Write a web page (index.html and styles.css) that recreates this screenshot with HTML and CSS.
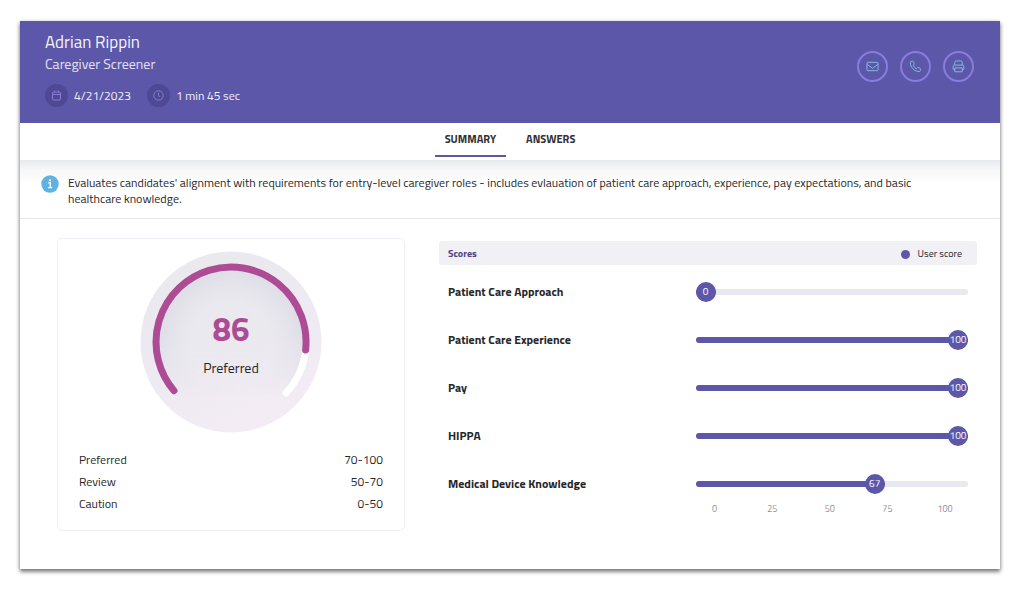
FILE: index.html
```html
<!DOCTYPE html>
<html lang="en">
<head>
<meta charset="utf-8">
<meta name="viewport" content="width=device-width, initial-scale=1">
<title>Adrian Rippin - Caregiver Screener</title>
<link rel="stylesheet" href="styles.css">
</head>
<body>
<main class="window">
  <header class="header">
    <div class="candidate">
      <h1 class="name">Adrian Rippin</h1>
      <p class="role">Caregiver Screener</p>
      <ul class="meta">
        <li class="meta-item">
          <span class="meta-icon"><svg width="11" height="11" viewBox="0 0 11 11"><rect x="1.5" y="2" width="8" height="8" rx="1"/><path d="M1.5 4.5h8M3.5 .7v2M7.500 .7v2"/></svg></span>
          4/21/2023
        </li>
        <li class="meta-item">
          <span class="meta-icon"><svg width="11" height="11" viewBox="0 0 11 11"><circle cx="5.500" cy="5.500" r="4.700"/><path d="M5.500 2.800v3l1.700 1"/></svg></span>
          1 min 45 sec
        </li>
      </ul>
    </div>
    <div class="actions">
      <button class="action" type="button" aria-label="Email"><svg width="13" height="13" viewBox="0 0 14 14"><rect x="1" y="2.500" width="12" height="9" rx="1"/><path d="M1.300 4.800 7 9l5.700-4.200"/></svg></button>
      <button class="action" type="button" aria-label="Call"><svg width="13" height="13" viewBox="0 0 14 14"><path d="M2.200 1.600 3.600 1.200c.5-.1.900.1 1.100.5l.9 2c.2.400.1.800-.2 1.100l-.9.900c.6 1.500 1.800 2.700 3.400 3.600l1-1c.3-.3.700-.3 1.100-.2l2 .9c.400.2.6.6.5 1.100l-.4 1.500c-.1.500-.5.8-1 .8C5.700 12.400 1.400 8 1.400 2.700c0-.6.3-1 .8-1.100Z"/></svg></button>
      <button class="action" type="button" aria-label="Print"><svg width="13" height="13" viewBox="0 0 14 14"><path d="M3 5.500V2.500A1.500 1.500 0 0 1 4.500 1h5A1.500 1.500 0 0 1 11 2.500v3M3 10H1.200V7A1.500 1.500 0 0 1 2.700 5.500h8.600A1.500 1.500 0 0 1 12.800 7v3H11M3 8.500h8v4.200H3z"/></svg></button>
    </div>
  </header>

  <div class="tabs" role="tablist">
    <button class="tab tab-active" type="button" role="tab" aria-selected="true">SUMMARY</button>
    <button class="tab" type="button" role="tab" aria-selected="false">ANSWERS</button>
  </div>

  <section class="notice">
    <svg class="notice-icon" width="18" height="18" viewBox="0 0 18 18"><circle cx="9" cy="9" r="8.700" fill="#5fb2e4"/><path d="M7.300 7.800h2v4.700M7 12.600h4.200" fill="none" stroke="#fff" stroke-width="1.400"/><circle cx="9" cy="5.300" r="1.100" fill="#fff"/></svg>
    <p class="notice-text">Evaluates candidates' alignment with requirements for entry-level caregiver roles - includes evlauation of patient care approach, experience, pay expectations, and basic healthcare knowledge.</p>
  </section>

  <div class="content">
    <section class="result">
      <div class="gauge">
        <svg class="gauge-art" viewBox="0 0 182 182" aria-hidden="true">
          <defs>
            <linearGradient id="disc" x1=".2" y1="0" x2=".7" y2="1">
              <stop offset="0" stop-color="#e9e9ee"/>
              <stop offset=".5" stop-color="#edeaf1"/>
              <stop offset="1" stop-color="#f4ecf5"/>
            </linearGradient>
            <linearGradient id="fade" x1="0" y1="0" x2="0" y2="1">
              <stop offset="0" stop-color="#fff"/>
              <stop offset=".45" stop-color="#fff"/>
              <stop offset=".85" stop-color="#000"/>
            </linearGradient>
            <radialGradient id="inner">
              <stop offset=".55" stop-color="#e8e8ed" stop-opacity=".6"/>
              <stop offset="1" stop-color="#dddce6"/>
            </radialGradient>
            <mask id="lower"><rect x="15" y="15" width="152" height="152" fill="url(#fade)"/></mask>
          </defs>
          <circle cx="91" cy="91" r="90.500" fill="url(#disc)"/>
          <circle cx="91" cy="91" r="74" fill="url(#inner)" mask="url(#lower)"/>
          <g fill="none" stroke-width="7" stroke-linecap="round">
            <path d="M165.600 99A75 75 0 0 1 146 142" stroke="#fff"/>
            <path d="M34 139.700A75 75 0 1 1 165.600 99" stroke="#ad4c95"/>
          </g>
        </svg>
        <div class="gauge-label">
          <strong class="gauge-value">86</strong>
          <span class="gauge-status">Preferred</span>
        </div>
      </div>
      <table class="ranges">
        <tr><th scope="row">Preferred</th><td>70-100</td></tr>
        <tr><th scope="row">Review</th><td>50-70</td></tr>
        <tr><th scope="row">Caution</th><td>0-50</td></tr>
      </table>
    </section>

    <section class="scores">
      <div class="scores-head">
        <h2 class="scores-title">Scores</h2>
        <span class="legend">User score</span>
      </div>
      <div class="score-list">
        <div class="score"><span id="s1">Patient Care Approach</span><div class="track" role="meter" aria-labelledby="s1" aria-valuenow="0"><div class="fill" style="--value: 0"><span class="knob">0</span></div></div></div>
        <div class="score"><span id="s2">Patient Care Experience</span><div class="track" role="meter" aria-labelledby="s2" aria-valuenow="100"><div class="fill" style="--value: 1"><span class="knob">100</span></div></div></div>
        <div class="score"><span id="s3">Pay</span><div class="track" role="meter" aria-labelledby="s3" aria-valuenow="100"><div class="fill" style="--value: 1"><span class="knob">100</span></div></div></div>
        <div class="score"><span id="s4">HIPPA</span><div class="track" role="meter" aria-labelledby="s4" aria-valuenow="100"><div class="fill" style="--value: 1"><span class="knob">100</span></div></div></div>
        <div class="score"><span id="s5">Medical Device Knowledge</span><div class="track" role="meter" aria-labelledby="s5" aria-valuenow="67"><div class="fill" style="--value: 0.67"><span class="knob">67</span></div></div></div>
      </div>
      <div class="axis-row">
        <div class="axis"><span>0</span><span>25</span><span>50</span><span>75</span><span>100</span></div>
      </div>
    </section>
  </div>
</main>
</body>
</html>
```
FILE: styles.css
```css
* { box-sizing: border-box; }

body {
  margin: 0;
  padding: 21px 24px 28px 20px;
  background: #fff;
  color: #262629;
  font-family: "Titillium Web", Roboto, "Liberation Sans", sans-serif;
  font-size: 12px;
  line-height: 16px;
}

h1, h2, p, ul { margin: 0; padding: 0; }
button { font-family: inherit; cursor: pointer; }

.window {
  background: #fff;
  box-shadow: 0 3px 4px rgba(0, 0, 0, .4), 0 1px 4px rgba(0, 0, 0, .3);
}

.header {
  display: flex;
  justify-content: space-between;
  align-items: flex-start;
  padding: 10px 26px 16px 25px;
  background: #5d57a9;
  color: #f3f2fb;
}
.name { font-size: 17px; line-height: 22px; font-weight: 400; }
.role { font-size: 14px; line-height: 22px; color: #e2e0f4; }
.meta {
  display: flex;
  gap: 16px;
  margin-top: 9px;
  list-style: none;
}
.meta-item { display: flex; align-items: center; gap: 6px; }
.meta-icon {
  display: grid;
  place-items: center;
  width: 23px;
  height: 23px;
  border-radius: 50%;
  background: #4f4895;
}
.meta-icon svg { fill: none; stroke: #857dd2; stroke-width: 1; }

.actions { display: flex; gap: 12px; padding-top: 20px; }
.action {
  display: grid;
  place-items: center;
  width: 31px;
  height: 31px;
  padding: 0;
  border: 2px solid #887ddd;
  border-radius: 50%;
  background: none;
}
.action svg { fill: none; stroke: #83c0e2; stroke-width: 1; stroke-linejoin: round; }

.tabs { display: flex; justify-content: center; gap: 10px; padding-bottom: 3px; }
.tab {
  padding: 8px 10px;
  border: 0;
  border-bottom: 2px solid transparent;
  background: none;
  color: #303034;
  font-size: 11px;
  line-height: 16px;
  font-weight: 700;
}
.tab-active { border-color: #5d57a9; }

.notice {
  display: flex;
  gap: 9px;
  padding: 15px 40px 11px 21px;
  border-bottom: 1px solid #e6e6ef;
  background: linear-gradient(#e6eaee, #f6f7f8 10px, #fff 24px);
}
.notice-icon { flex: none; }

.content {
  display: grid;
  grid-template-columns: 348fr 538fr;
  gap: 34px;
  padding: 19px 23px 38px 37px;
}

.result {
  padding: 12px 21px 15px;
  border: 1px solid #efeff6;
  border-radius: 5px;
}
.gauge { display: grid; place-items: center; }
.gauge > * { grid-area: 1 / 1; }
.gauge-art { width: 182px; height: 182px; }
.gauge-label { display: grid; justify-items: center; gap: 12px; padding-top: 4px; }
.gauge-value { color: #ad4c95; font-size: 33px; line-height: 36px; font-weight: 700; }
.gauge-status { font-size: 14px; line-height: 18px; }
.ranges { width: 100%; margin-top: 16px; border-collapse: collapse; line-height: 22px; }
.ranges th, .ranges td { padding: 0; font-weight: 400; }
.ranges th { text-align: left; }
.ranges td { text-align: right; }

.scores { padding-top: 3px; }
.scores-head {
  display: flex;
  justify-content: space-between;
  align-items: center;
  padding: 5px 15px 3px 9px;
  border-radius: 3px;
  background: #f0f0f5;
}
.scores-title { color: #4a4384; font-size: 10px; line-height: 16px; font-weight: 700; }
.legend { display: flex; align-items: center; gap: 8px; font-size: 10px; }
.legend::before {
  content: "";
  width: 9px;
  height: 9px;
  border-radius: 50%;
  background: #5d57a9;
}
.score-list { display: grid; gap: 28px; padding: 17px 9px 0; }
.score, .axis-row { display: grid; grid-template-columns: 10fr 11fr; }
.score { align-items: center; height: 20px; font-weight: 700; }
.track {
  height: 6px;
  border-radius: 3px;
  background: #e9e8f0;
}
.fill {
  display: flex;
  align-items: center;
  justify-content: flex-end;
  width: calc(20px + (100% - 20px) * var(--value));
  height: 6px;
  border-radius: 3px;
  background: #5d57a9;
}
.knob {
  display: grid;
  place-items: center;
  flex: none;
  width: 20px;
  height: 20px;
  border-radius: 50%;
  background: #5d57a9;
  color: #fff;
  font-size: 10px;
  font-weight: 400;
}
.axis-row { padding: 7px 9px 0; }
.axis {
  display: flex;
  grid-column: 2;
  justify-content: space-between;
  padding: 0 10px 0 6px;
  color: #8e8e98;
  font-size: 9px;
}
.axis span { width: 26px; text-align: center; }
```
